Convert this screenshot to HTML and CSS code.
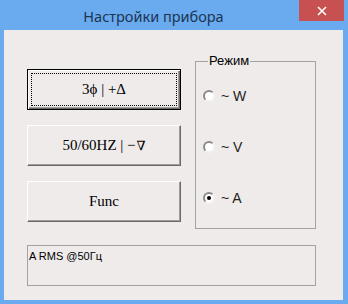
FILE: index.html
```html
<!DOCTYPE html>
<html lang="ru">

<head>
    <meta charset="UTF-8">
    <title>Настройки прибора</title>
    <link rel="stylesheet" href="styles.css">
</head>

<body>
    <div class="window">
        <div class="title_bar">
            <div class="title">Настройки прибора</div>
            <div class="close">
                <svg width="10" height="10" viewBox="0 0 10 10">
                    <path d="M1 1L9 9M9 1L1 9" stroke="#fff" stroke-width="1.6" fill="none"/>
                </svg>
            </div>
        </div>
        <div class="client">
            <div class="top_row">
                <div class="buttons">
                    <div class="btn btn_default"><span>3ϕ | +Δ</span></div>
                    <div class="btn">50/60HZ | −<span class="nabla">∇</span></div>
                    <div class="btn">Func</div>
                </div>
                <fieldset class="mode">
                    <legend>Режим</legend>
                    <div class="radio"><span class="dot"></span>~ W</div>
                    <div class="radio"><span class="dot"></span>~ V</div>
                    <div class="radio"><span class="dot checked"></span>~ A</div>
                </fieldset>
            </div>
            <div class="status">A RMS @50Гц</div>
        </div>
    </div>
</body>

</html>
```

FILE: styles.css
```css
* {
    margin: 0;
    padding: 0;
    box-sizing: border-box;
}

body {
    background-color: #6aaaee;
}

.window {
    width: 348px;
    height: 304px;
    display: flex;
    flex-direction: column;
    background-color: #6aaaee;
}

.title_bar {
    height: 30px;
    display: flex;
    align-items: flex-start;
}

.title {
    flex: 1;
    height: 30px;
    line-height: 32px;
    padding-left: 8px;
    text-align: center;
    font-family: "Noto Sans", sans-serif;
    font-size: 14.5px;
    color: #1b3553;
}

.close {
    width: 45px;
    height: 21px;
    margin-right: 4px;
    background-color: #c75050;
    display: flex;
    align-items: center;
    justify-content: center;
}

.client {
    flex: 1;
    margin: 0 5px 4px 4px;
    background-color: #efebeb;
    padding: 24px 0 0 23px;
}

.top_row {
    display: flex;
    align-items: flex-start;
}

.buttons {
    margin-top: 15px;
    display: flex;
    flex-direction: column;
    gap: 15px;
}

.btn {
    width: 154px;
    height: 41px;
    display: flex;
    align-items: center;
    justify-content: center;
    font-family: "Liberation Serif", "DejaVu Serif", serif;
    font-size: 15px;
    color: #000;
    border-top: 1px solid #fff;
    border-left: 1px solid #fff;
    border-right: 1px solid #6a6a6a;
    border-bottom: 1px solid #6a6a6a;
    box-shadow: inset -1px -1px #a09c9c;
}

.nabla {
    font-family: "DejaVu Serif", serif;
    font-weight: normal;
    font-size: 13px;
    margin-left: 1px;
}

.btn_default {
    border: 1px solid #000;
    box-shadow: inset 1px 1px #fff, inset -1px -1px #6a6a6a, inset -2px -2px #a09c9c;
    outline: 1px dotted #000;
    outline-offset: -5px;
}

.mode {
    width: 121px;
    height: 175px;
    margin-left: 14px;
    border: 1px solid #a5a1a1;
    padding: 18px 0 0 7px;
    display: flex;
    flex-direction: column;
    gap: 31px;
}

.mode legend {
    margin-left: 5px;
    padding: 0 1px;
    line-height: 14px;
    font-family: "Liberation Sans", sans-serif;
    font-size: 13px;
    color: #000;
}

.radio {
    height: 20px;
    display: flex;
    align-items: center;
    gap: 6px;
    font-family: "Liberation Sans", sans-serif;
    font-size: 14px;
    color: #222;
}

.dot {
    width: 12px;
    height: 12px;
    border-radius: 50%;
    background-color: #fff;
    border: 2px solid;
    border-color: #8c8a8a #f4f2f2 #f4f2f2 #8c8a8a;
    display: flex;
    align-items: center;
    justify-content: center;
}

.checked::after {
    content: "";
    width: 4px;
    height: 4px;
    border-radius: 50%;
    background-color: #000;
}

.status {
    width: 289px;
    height: 41px;
    margin-top: 16px;
    border: 1px solid #a5a1a1;
    padding: 4px 1px;
    font-family: "Liberation Sans", sans-serif;
    font-size: 11px;
    line-height: 13px;
    color: #000;
}
```
